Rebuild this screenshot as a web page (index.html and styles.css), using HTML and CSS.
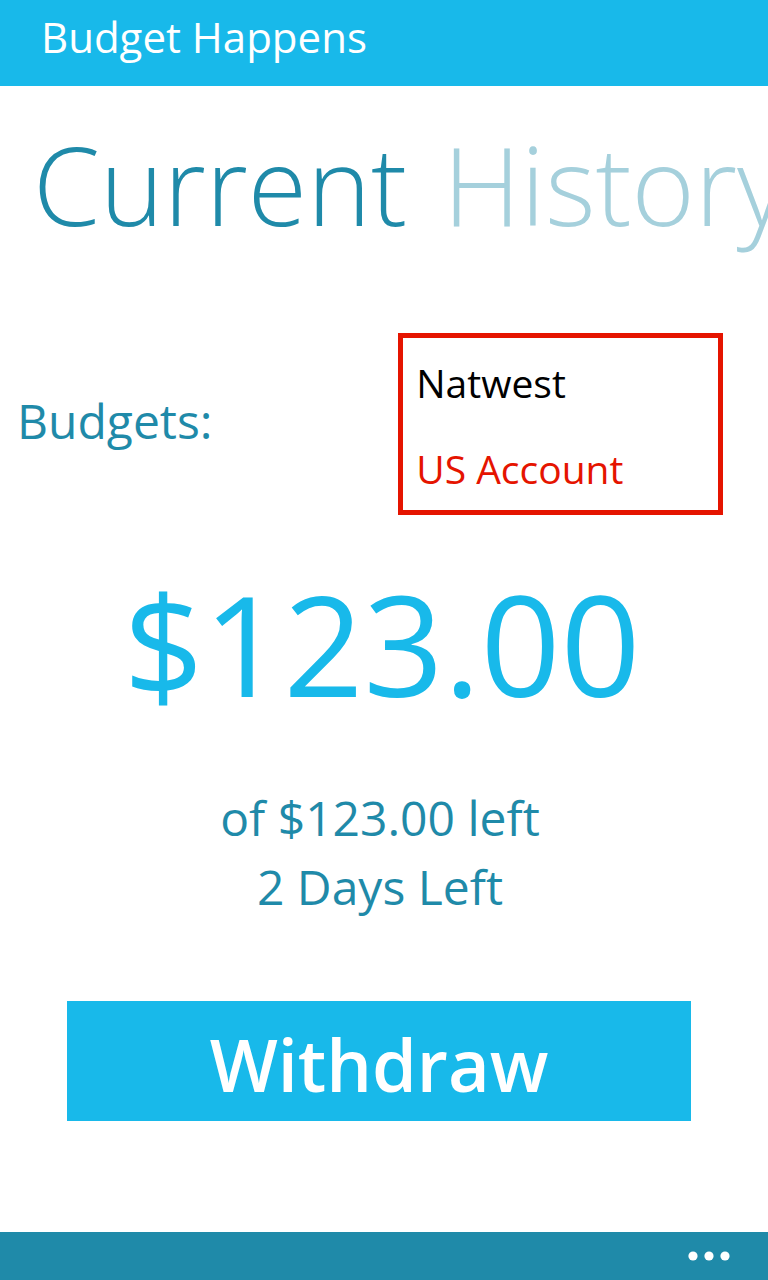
FILE: index.html
```html
<!DOCTYPE html>
<html lang="en">
<head>
<meta charset="utf-8">
<meta name="viewport" content="width=device-width, initial-scale=1">
<title>Budget Happens</title>
<link rel="stylesheet" href="styles.css">
</head>
<body>
<header class="app-bar"><h1 class="app-title">Budget Happens</h1></header>
<nav class="pivot">
<button class="pivot-tab pivot-tab-active" type="button">Current</button>
<button class="pivot-tab" type="button">History</button>
</nav>
<main class="content">
<div class="budget-row">
<label class="budget-label" for="budget">Budgets:</label>
<select class="budget-list" id="budget" size="2">
<option class="budget-option">Natwest</option>
<option class="budget-option budget-option-current">US Account</option>
</select>
</div>
<p class="amount">$123.00</p>
<p class="detail">of $123.00 left</p>
<p class="detail">2 Days Left</p>
<button class="withdraw" type="button">Withdraw</button>
</main>
<footer class="command-bar">
<button class="more" type="button" aria-label="More">
<svg class="more-icon" viewBox="0 0 42 10" aria-hidden="true"><circle cx="5" cy="5" r="4.6"/><circle cx="21" cy="5" r="4.6"/><circle cx="37" cy="5" r="4.6"/></svg>
</button>
</footer>
</body>
</html>
```

FILE: styles.css
```css
* { box-sizing: border-box; }
body {
  margin: 0;
  min-height: 100vh;
  display: flex;
  flex-direction: column;
  overflow-x: hidden;
  background: #fff;
  color: #1f8aa9;
  font-family: "Open Sans", "Noto Sans", sans-serif;
}
button, select { font: inherit; border: 0; padding: 0; background: none; }
.app-bar { background: #18b9ea; color: #fff; padding: 7px 41px 19px; }
.app-title { margin: 0; font-size: 42px; line-height: 60px; font-weight: 400; }
.pivot {
  display: flex;
  gap: 36px;
  padding: 19px 0 5px 33px;
  overflow: hidden;
}
.pivot-tab {
  flex: none;
  color: #a5d0dc;
  font-size: 108px;
  line-height: 160px;
  font-weight: 300;
}
.pivot-tab-active { color: #1f8aa9; }
.content { flex: 1; display: flex; flex-direction: column; }
.budget-row {
  display: flex;
  align-items: center;
  justify-content: space-between;
  margin: 63px 45px 0 17px;
}
.budget-label { font-size: 48px; line-height: 64px; padding-bottom: 6px; }
.budget-list {
  width: 46%;
  height: 182px;
  padding: 4px 13px;
  border: 5px solid #e51400;
  border-radius: 0;
  color: #000;
  font-size: 39px;
  overflow: hidden;
  outline: none;
  appearance: none;
}
.budget-option { padding: 14px 0 0; line-height: 72px; min-height: 86px; }
.budget-option-current { color: #e51400; }
.amount {
  margin: 28px 4px 40px 0;
  color: #18b9ea;
  text-align: center;
  font-size: 140px;
  line-height: 200px;
}
.detail { margin: 0 8px 0 0; text-align: center; font-size: 48px; line-height: 69px; }
.withdraw {
  margin: 80px 77px 0 67px;
  height: 120px;
  padding-top: 6px;
  background: #18b9ea;
  color: #fff;
  font-size: 72px;
  line-height: 100px;
  font-weight: 600;
}
.command-bar {
  display: flex;
  justify-content: flex-end;
  padding: 0 38px;
  background: #1f8aa9;
}
.more { display: flex; align-items: center; height: 48px; }
.more-icon { width: 42px; height: 10px; fill: #fff; }
```
